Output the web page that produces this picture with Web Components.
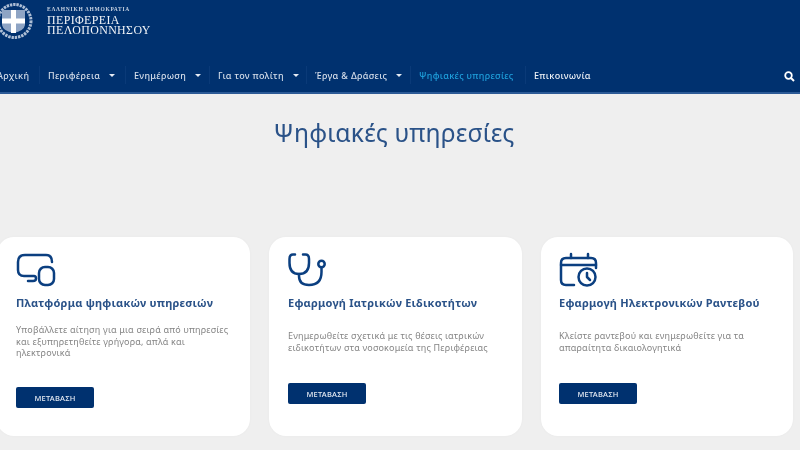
<!DOCTYPE html>
<html lang="el"><head><meta charset="utf-8"><title>Ψηφιακές υπηρεσίες</title>
<style>
html,body{margin:0;padding:0;background:#efefef;overflow:hidden;height:450px}
body{font-family:"Noto Sans","Open Sans",sans-serif}
</style></head><body>
<site-header></site-header>
<page-title>Ψηφιακές υπηρεσίες</page-title>
<card-row>
<service-card heading="Πλατφόρμα ψηφιακών υπηρεσιών" icon="chat" pad="19" btn="15">Υποβάλλετε αίτηση για μια σειρά από υπηρεσίες και εξυπηρετηθείτε γρήγορα, απλά και ηλεκτρονικά</service-card>
<service-card heading="Εφαρμογή Ιατρικών Ειδικοτήτων" icon="steth" pad="19" btn="11">Ενημερωθείτε σχετικά με τις θέσεις ιατρικών ειδικοτήτων στα νοσοκομεία της Περιφέρειας</service-card>
<service-card heading="Εφαρμογή Ηλεκτρονικών Ραντεβού" icon="cal" pad="18" btn="11">Κλείστε ραντεβού και ενημερωθείτε για τα απαραίτητα δικαιολογητικά</service-card>
</card-row>
<script>
const soft='filter:blur(.7px);';
class SiteHeader extends HTMLElement{constructor(){super();this.attachShadow({mode:'open'}).innerHTML=`
<style>
:host{display:block;height:94px;background:#00316f;box-sizing:border-box;box-shadow:inset 0 -2px 0 #2c5a96;color:#fff;overflow:hidden}
.wrap{${soft}}
.top{height:58px;display:flex;align-items:flex-start;gap:13px;padding:1px 0 0 0;margin-left:-4px;box-sizing:border-box}
.t{display:flex;flex-direction:column;margin-top:5px;font-family:"Liberation Serif",serif;color:#f1f4f8}
.s{font-size:5.500px;line-height:6px;letter-spacing:.75px;font-weight:700;margin-bottom:3px;color:#c8d3e2;white-space:nowrap}
.b{font-size:11.900px;line-height:10px;letter-spacing:.4px;white-space:nowrap}
nav{height:34px;display:flex;align-items:center;font-size:9px;font-weight:500;letter-spacing:.33px;margin-left:-3px;color:#d5deea;white-space:nowrap}
nav a{display:flex;align-items:center;gap:9px;box-sizing:border-box;height:18px;border-right:1px solid #0a3a78;margin-right:8px}
nav a i{width:0;height:0;border:3px solid transparent;border-top:3px solid #e6ecf4;border-bottom:0}
nav a.on{color:#1ea0dc}
nav svg{position:absolute;left:784px;top:71px}
</style>
<div class="wrap">
<div class="top">
<svg width="38" height="40" viewBox="0 0 38 40"><circle cx="18.500" cy="20" r="16.500" fill="none" stroke="#aebfd6" stroke-width="3" stroke-dasharray="2.400 .9"/><path d="M6 9h23v15q-1 6-11.500 8Q7 30 6 24z" fill="#8ea4c4"/><path d="M15 9h5v8.500h9v5h-9V32h-5v-9.500H6v-5h9z" fill="#fff"/></svg>
<div class="t"><span class="s">ΕΛΛΗΝΙΚΗ ΔΗΜΟΚΡΑΤΙΑ</span><span class="b">ΠΕΡΙΦΕΡΕΙΑ</span><span class="b">ΠΕΛΟΠΟΝΝΗΣΟΥ</span></div>
</div>
<nav>
<a style="width:43px">Αρχική</a><a style="width:78px">Περιφέρεια<i></i></a><a style="width:76px">Ενημέρωση<i></i></a><a style="width:89px">Για τον πολίτη<i></i></a><a style="width:96px">Έργα &amp; Δράσεις<i></i></a><a class="on" style="width:107px">Ψηφιακές υπηρεσίες</a><a style="color:#eef2f7;border:0">Επικοινωνία</a>
<svg width="11" height="11" viewBox="0 0 11 11"><circle cx="4.500" cy="4.500" r="3.300" fill="none" stroke="#fff" stroke-width="1.800"/><path d="M7 7l3 3" stroke="#fff" stroke-width="2"/></svg>
</nav></div>`}}
class PageTitle extends HTMLElement{constructor(){super();this.attachShadow({mode:'open'}).innerHTML=`
<style>:host{display:block;height:143px;box-sizing:border-box;padding-top:23px;text-align:center;color:#2a5288;font-size:24.700px;line-height:32px;letter-spacing:.2px;margin-left:-12px;filter:blur(.55px)}</style><slot></slot>`}}
class CardRow extends HTMLElement{constructor(){super();this.attachShadow({mode:'open'}).innerHTML=`
<style>:host{display:grid;grid-template-columns:253px 253px 252px;gap:19px;margin-left:-3px;width:810px}</style><slot></slot>`}}
const ICONS={
chat:'<path d="M36 10Q36 3 30 3H9Q2 3 2 10V18Q2 24 8 24H18Q20 24 20 26.500Q20 29 17 29H12"/><rect x="23" y="15" width="15" height="18" rx="6"/>',
steth:'<path d="M7 2.500H5Q1.500 2.500 1.500 7V11Q1.500 22 11 22Q21 22 21 11V7Q21 2.500 17.500 2.500H15"/><path d="M11 22V24Q11 33 21 33Q33.500 33 33.500 20V15.500"/><circle cx="33.500" cy="12" r="3.200"/>',
cal:'<path d="M15 33H7Q2 33 2 28V11Q2 6 7 6H32Q37 6 37 11V16"/><path d="M2 13H37M12 2V6M29 2V6"/><circle cx="28" cy="25" r="8.500"/><path d="M28 21V25L31 28"/>'};
class ServiceCard extends HTMLElement{constructor(){super();const a=n=>this.getAttribute(n);this.attachShadow({mode:'open'}).innerHTML=`
<style>
:host{display:block;height:199px;background:#fff;border-radius:17px;box-sizing:border-box;padding:15px 10px 0 ${a('pad')}px;box-shadow:0 0 3px rgba(0,0,0,.03)}
.in{filter:blur(.6px);display:flex;flex-direction:column;height:100%}
svg{display:block;width:40px;height:36px;fill:none;stroke:#0b3f80;stroke-width:2.500;stroke-linecap:round;stroke-linejoin:round}
h3{margin:7px 0 0;font-size:11px;line-height:16px;font-weight:700;color:#2a5288;white-space:nowrap;letter-spacing:.23px}
p{margin:0;height:61px;width:216px;font-size:9px;line-height:11.500px;letter-spacing:.2px;color:#858585;display:flex;align-items:center}
.btn{align-self:flex-start;margin-top:${a('btn')}px;width:78px;height:21px;border-radius:2px;background:#00316f;color:#e4eaf3;font-size:7.500px;font-weight:500;letter-spacing:.2px;display:flex;align-items:center;justify-content:center}
</style>
<div class="in"><svg viewBox="0 0 40 36">${ICONS[a('icon')]}</svg><h3>${a('heading')}</h3><p><span><slot></slot></span></p><span class="btn">ΜΕΤΑΒΑΣΗ</span></div>`}}
customElements.define('site-header',SiteHeader);
customElements.define('page-title',PageTitle);
customElements.define('card-row',CardRow);
customElements.define('service-card',ServiceCard);
</script></body></html>
